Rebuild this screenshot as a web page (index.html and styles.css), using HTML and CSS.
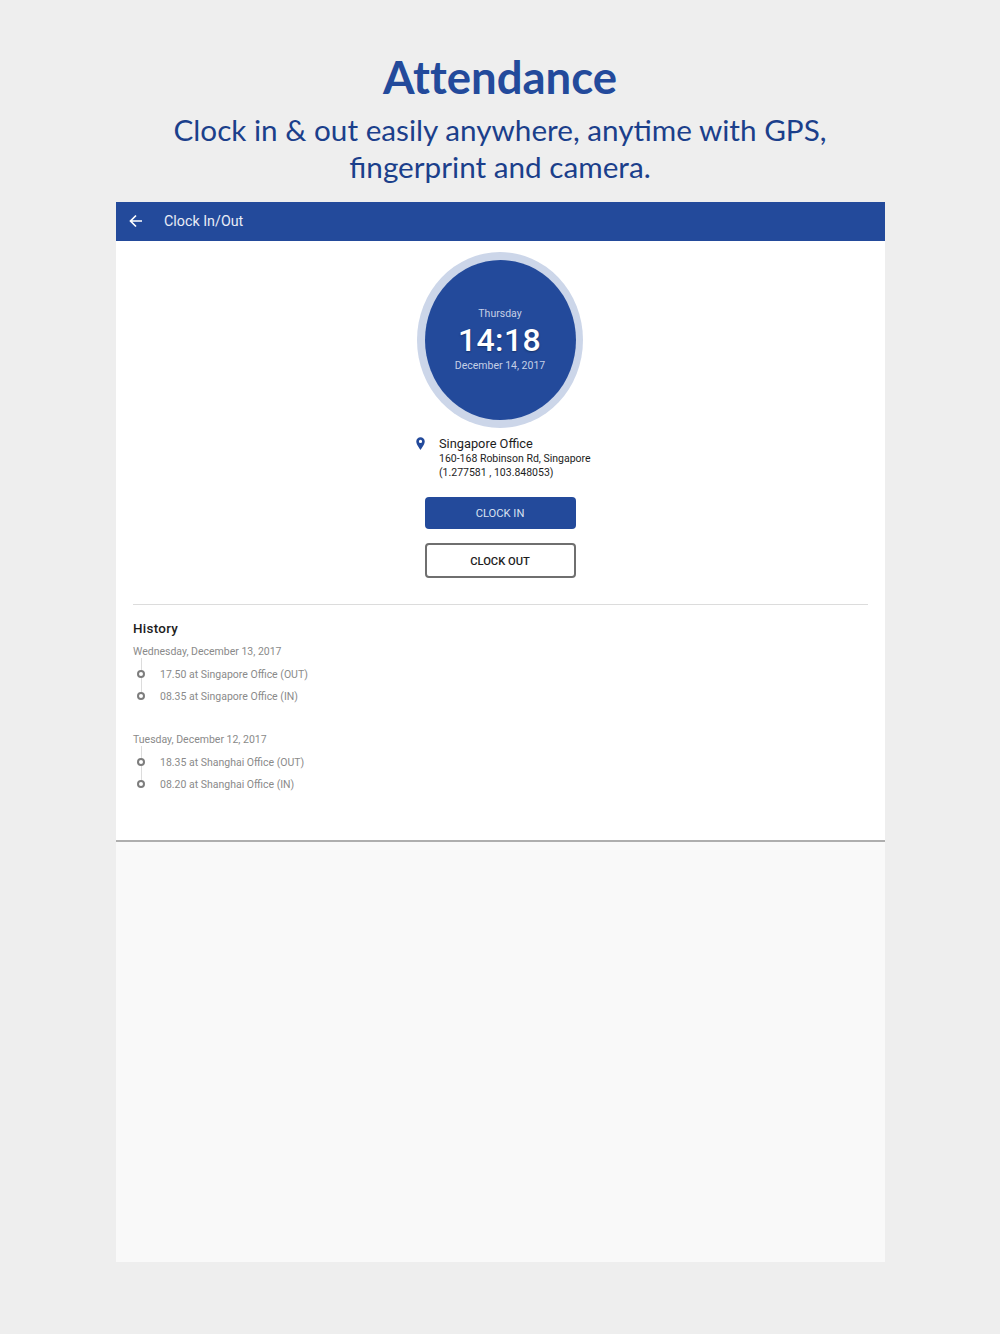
FILE: index.html
```html
<!DOCTYPE html>
<html lang="en">
<head>
<meta charset="utf-8">
<title>Attendance</title>
<link rel="stylesheet" href="styles.css">
</head>
<body>
<header class="promo">
  <h1 class="promo-title">Attendance</h1>
  <p class="promo-sub">Clock in &amp; out easily anywhere, anytime with GPS,<br>fingerprint and camera.</p>
</header>
<main class="device">
  <div class="toolbar">
    <svg class="back" viewBox="0 0 14 14" width="14" height="14"><path d="M13 7H2M7 1.500 1.500 7 7 12.500" fill="none" stroke="#fff" stroke-width="1.700"/></svg>
    <span class="toolbar-title">Clock In/Out</span>
  </div>
  <section class="content">
    <div class="clock-wrap">
      <div class="clock">
        <div class="clock-day">Thursday</div>
        <div class="clock-time">14:18</div>
        <div class="clock-date">December 14, 2017</div>
      </div>
    </div>
    <div class="location">
      <svg class="pin" viewBox="0 0 10 14" width="9" height="13"><path fill-rule="evenodd" d="M5 0a4.700 4.700 0 0 0-4.700 4.700C.3 8.200 5 14 5 14s4.700-5.800 4.700-9.300A4.700 4.700 0 0 0 5 0Zm0 6.500a1.800 1.800 0 1 1 0-3.600 1.800 1.800 0 0 1 0 3.600Z" fill="#234a9b"/></svg>
      <div class="location-text">
        <div class="location-name">Singapore Office</div>
        <div class="location-line">160-168 Robinson Rd, Singapore</div>
        <div class="location-line">(1.277581 , 103.848053)</div>
      </div>
    </div>
    <button class="btn btn-in" type="button">CLOCK IN</button>
    <button class="btn btn-out" type="button">CLOCK OUT</button>
    <hr class="divider">
    <h2 class="history-title">History</h2>
    <div class="day">
      <div class="day-label">Wednesday, December 13, 2017</div>
      <ul class="entries">
        <li class="entry">17.50 at Singapore Office (OUT)</li>
        <li class="entry">08.35 at Singapore Office (IN)</li>
      </ul>
    </div>
    <div class="day">
      <div class="day-label">Tuesday, December 12, 2017</div>
      <ul class="entries">
        <li class="entry">18.35 at Shanghai Office (OUT)</li>
        <li class="entry">08.20 at Shanghai Office (IN)</li>
      </ul>
    </div>
  </section>
  <div class="empty"></div>
</main>
</body>
</html>
```
FILE: styles.css
```css
*, *::before, *::after { box-sizing: border-box; }
html, body { margin: 0; padding: 0; }
body {
  width: 1000px;
  height: 1334px;
  background: #eeeeee;
  font-family: Roboto, sans-serif;
  overflow: hidden;
}
.promo {
  height: 202px;
  padding-top: 47px;
  text-align: center;
  font-family: Lato, sans-serif;
}
.promo-title {
  margin: 0;
  height: 60px;
  font-size: 45.500px;
  line-height: 60px;
  font-weight: 700;
  font-variant-ligatures: none;
  color: #234a9b;
}
.promo-sub {
  margin: 0;
  padding-top: 4px;
  font-size: 29.700px;
  line-height: 37px;
  color: #1b3f8b;
}
.device {
  width: 769px;
  height: 1060px;
  margin-left: 116px;
  display: flex;
  flex-direction: column;
}
.toolbar {
  height: 39px;
  flex: none;
  background: #234a9b;
  display: flex;
  align-items: center;
  padding: 0 0 2px 13px;
  color: #fff;
}
.back { flex: none; }
.toolbar-title {
  margin-left: 21px;
  font-size: 14.300px;
  color: #e9edf6;
}
.content {
  height: 601px;
  flex: none;
  background: #fff;
  border-bottom: 2px solid #aeaeae;
  display: flex;
  flex-direction: column;
  align-items: center;
  padding: 11px 17px 0 16px;
}
.clock-wrap {
  width: 166px;
  height: 176px;
  flex: none;
  border-radius: 50%;
  background: #ccd6e9;
  display: flex;
  align-items: center;
  justify-content: center;
}
.clock {
  width: 151px;
  height: 160px;
  border-radius: 50%;
  background: #234a9b;
  color: #fff;
  text-align: center;
  display: flex;
  flex-direction: column;
  align-items: center;
  padding-top: 47px;
}
.clock-day {
  font-size: 10.500px;
  line-height: 14px;
  color: #c5d0e6;
}
.clock-time {
  padding-right: 1px;
  font-size: 32px;
  line-height: 38px;
  font-weight: 500;
  letter-spacing: .4px;
  text-shadow: 0 1px 2px rgba(0, 0, 0, .35);
}
.clock-date {
  font-size: 10.500px;
  line-height: 14px;
  color: #c5d0e6;
}
.location {
  width: 170px;
  margin-top: 7px;
  margin-left: 2px;
  display: flex;
  gap: 14px;
  flex: none;
}
.pin { flex: none; margin-top: 2px; }
.location-text { white-space: nowrap; color: #1d1d1d; }
.location-name { font-size: 12.800px; line-height: 17px; }
.location-line { font-size: 10.500px; line-height: 13.500px; }
.btn {
  display: block;
  width: 151px;
  flex: none;
  padding: 0;
  font-family: Roboto, sans-serif;
  font-size: 11.200px;
  border-radius: 4px;
}
.btn-in {
  height: 32px;
  margin-top: 18px;
  background: #234a9b;
  border: 0;
  color: #d9e1f0;
}
.btn-out {
  height: 35px;
  margin-top: 14px;
  padding-top: 1px;
  background: #fff;
  border: 2px solid #6f6f6f;
  color: #1d1d1d;
  font-weight: 500;
}
.divider {
  align-self: stretch;
  flex: none;
  margin: 26px 0 0 1px;
  border: 0;
  border-top: 1px solid #dcdcdc;
}
.history-title {
  align-self: flex-start;
  margin: 15px 0 0 1px;
  font-size: 13.400px;
  line-height: 17px;
  font-weight: 500;
  letter-spacing: .3px;
  color: #1d1d1d;
}
.day {
  align-self: flex-start;
  margin-left: 1px;
  margin-bottom: 18px;
  flex: none;
}
.day-label {
  margin-top: 8px;
  font-size: 10.500px;
  line-height: 14px;
  color: #8a8a8a;
}
.entries {
  list-style: none;
  margin: 0;
  padding: 5px 0 0;
}
.entry {
  position: relative;
  height: 21.500px;
  padding-left: 27px;
  font-size: 10.500px;
  line-height: 21.500px;
  color: #8a8a8a;
}
.entry::before {
  content: "";
  position: absolute;
  left: 4px;
  top: 6px;
  width: 8px;
  height: 8px;
  border: 2px solid #7d7d7d;
  border-radius: 50%;
  background: #fff;
  z-index: 1;
}
.entry::after {
  content: "";
  position: absolute;
  left: 7.500px;
  top: -6px;
  width: 1px;
  height: 27.500px;
  background: #dcdcdc;
}
.entry:last-child::after {
  top: 0;
  height: 8px;
}
.empty {
  flex: 1;
  background: #f9f9f9;
}
```
